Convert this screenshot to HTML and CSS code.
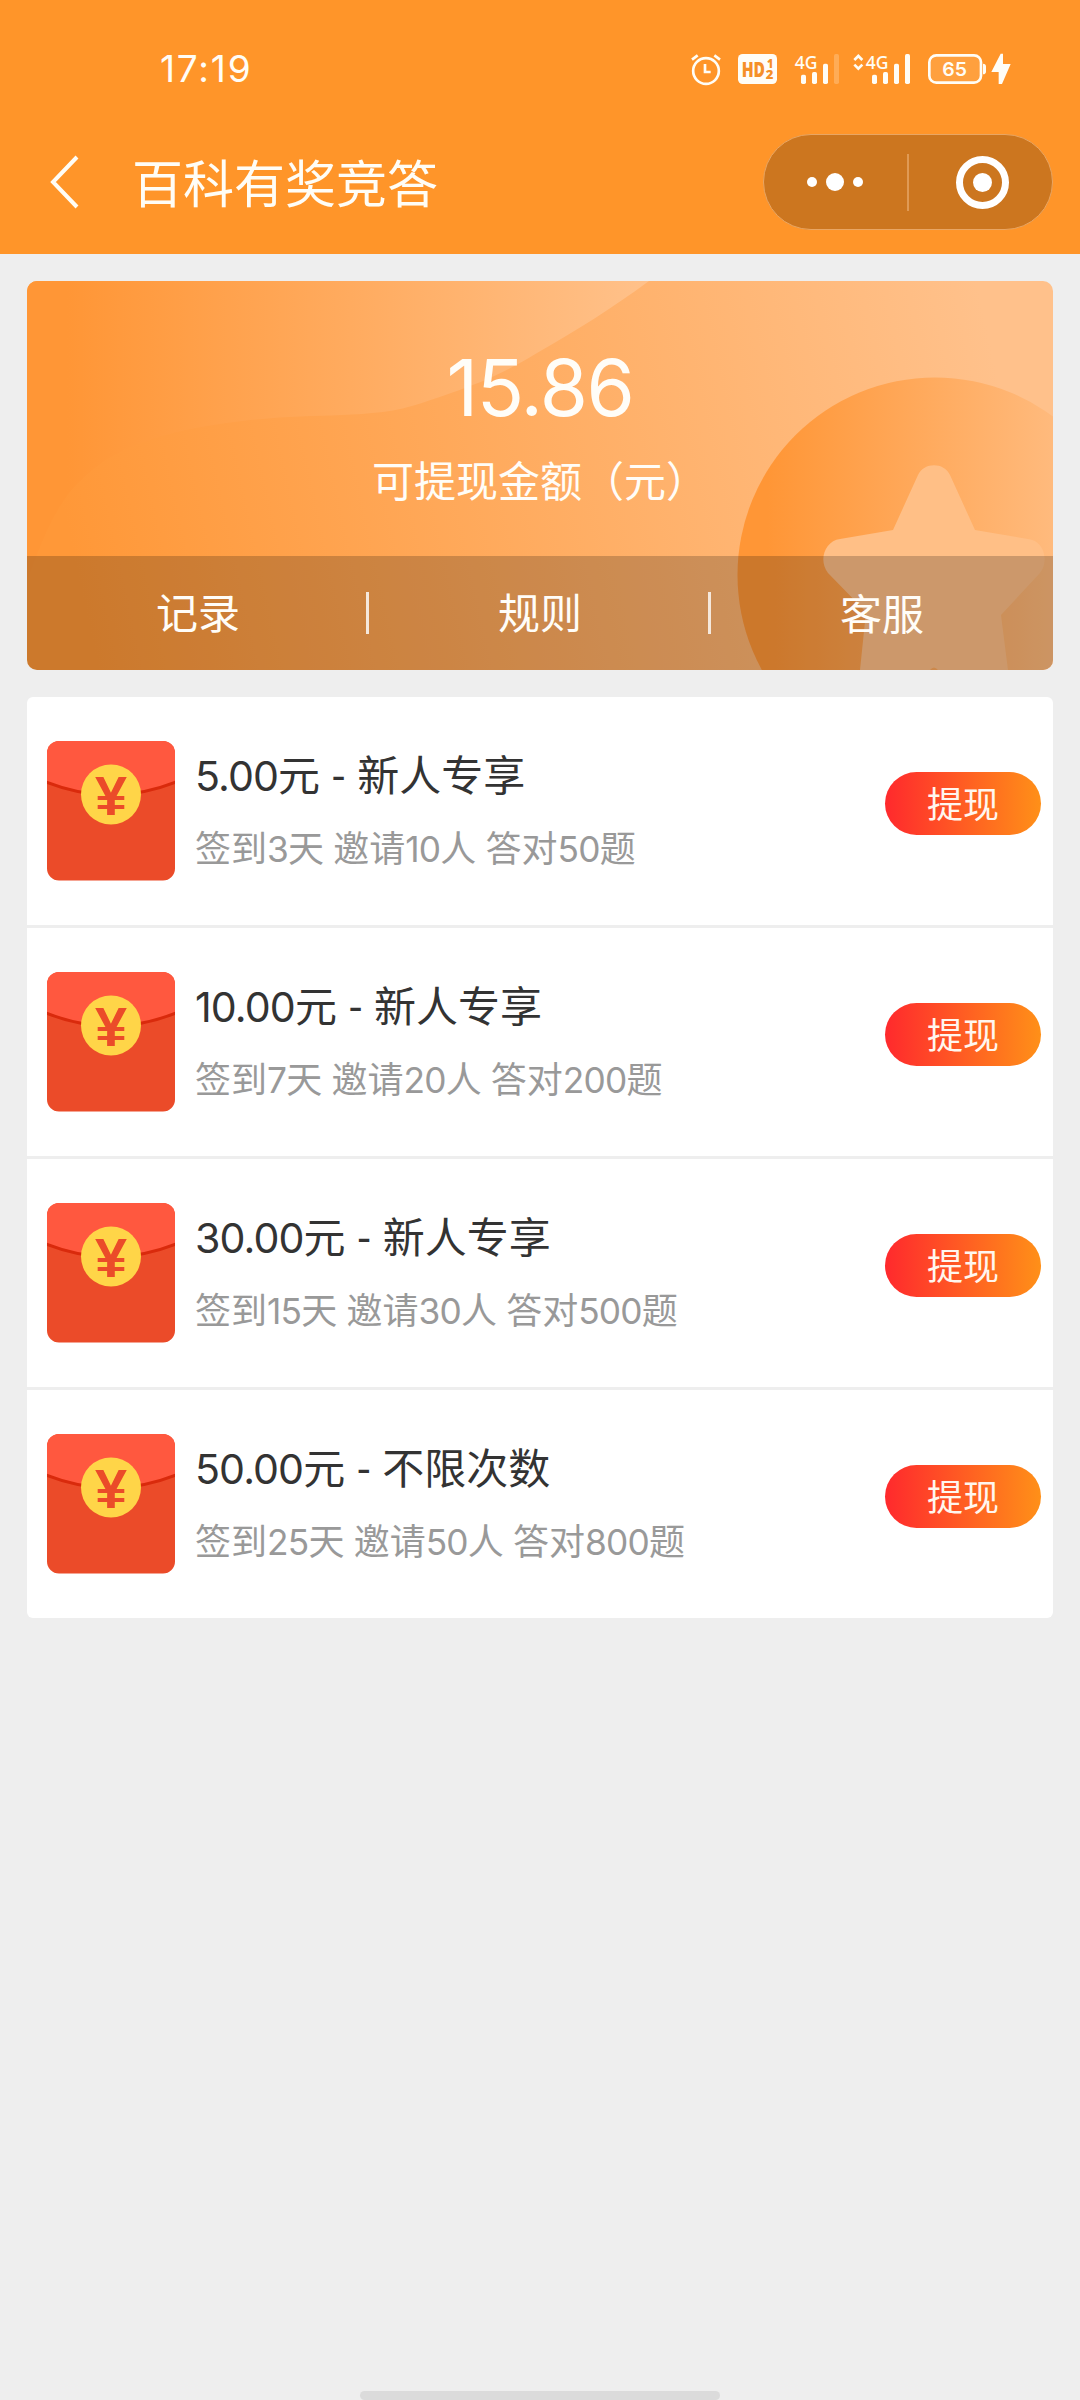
FILE: index.html
```html
<!DOCTYPE html>
<html lang="zh-CN">
<head>
<meta charset="utf-8">
<title>百科有奖竞答</title>
<link rel="stylesheet" href="styles.css">
</head>
<body>
<svg class="defs" width="0" height="0" aria-hidden="true">
  <defs>
    <clipPath id="envelope"><rect width="128" height="139.500" rx="12"/></clipPath>
    <symbol id="red-packet" viewBox="0 0 128 140">
      <g clip-path="url(#envelope)">
        <rect width="128" height="140" fill="#eb4b29"/>
        <path d="M0 0H128V41Q64 67 0 41Z" fill="#ff583f"/>
        <path d="M-1 41Q64 67 129 41" fill="none" stroke="#d92a0c" stroke-width="3"/>
      </g>
      <circle cx="64" cy="53.500" r="30" fill="#ffd548"/>
      <text x="64" y="74" text-anchor="middle" textLength="32" lengthAdjust="spacingAndGlyphs" class="yen">¥</text>
    </symbol>
  </defs>
</svg>

<header class="header">
  <div class="status">
    <time class="clock">17:19</time>
    <svg class="status-icons" viewBox="0 0 1140 240" fill="#fffdf6">
      <g fill="none" stroke="#fffdf6" stroke-width="8">
        <circle cx="138" cy="123" r="38.500"/>
        <path d="M96 89L113 76M180 89L163 76"/>
        <path d="M135 102V126H152"/>
      </g>
      <rect x="234" y="72" width="117" height="90" rx="14"/>
      <g class="hd"><text x="245" y="140" font-size="64" textLength="70" lengthAdjust="spacingAndGlyphs">HD</text>
        <text x="321" y="114" font-size="38" textLength="19" lengthAdjust="spacingAndGlyphs">1</text>
        <text x="317" y="148" font-size="38" textLength="23" lengthAdjust="spacingAndGlyphs">2</text></g>
      <text class="net" x="404" y="116" textLength="68" lengthAdjust="spacingAndGlyphs">4G</text>
      <rect x="423" y="134" width="15" height="28" rx="5"/><rect x="456" y="126" width="15" height="36" rx="5"/><rect x="489" y="101" width="15" height="61" rx="5"/><rect x="522" y="72" width="15" height="90" rx="5" fill-opacity=".22"/>
      <path d="M583 90L595 78L607 90M583 104L595 116L607 104" fill="none" stroke="#fffdf6" stroke-width="8"/>
      <text class="net" x="617" y="116" textLength="68" lengthAdjust="spacingAndGlyphs">4G</text>
      <rect x="636" y="134" width="15" height="28" rx="5"/><rect x="669" y="126" width="15" height="36" rx="5"/><rect x="702" y="101" width="15" height="61" rx="5"/><rect x="735" y="72" width="15" height="90" rx="5"/>
      <rect x="808" y="76" width="155" height="82" rx="21" fill="#ffa03e" stroke="#fffdf6" stroke-width="8"/>
      <path d="M969 101q9 1 9 8v16q0 7-9 8z"/>
      <text class="charge" x="847" y="138" textLength="74" lengthAdjust="spacingAndGlyphs">65</text>
      <path d="M1022 71L994 126H1016V162H1026L1052 102H1029V71Z"/>
    </svg>
  </div>
  <div class="navbar">
    <svg class="back" viewBox="0 0 30 54"><path d="M27 2L3 27L27 52" fill="none" stroke="#fffdf6" stroke-width="4"/></svg>
    <h1 class="title">百科有奖竞答</h1>
    <div class="capsule">
      <svg class="more" viewBox="0 0 56 18" fill="#fff"><circle cx="5" cy="9" r="5"/><circle cx="28" cy="9" r="9"/><circle cx="51" cy="9" r="5"/></svg>
      <span class="capsule-line"></span>
      <svg class="target" viewBox="0 0 53 53" fill="#fff"><circle cx="26.500" cy="26.500" r="23" fill="none" stroke="#fff" stroke-width="7"/><circle cx="26.500" cy="26.500" r="9.500"/></svg>
    </div>
  </div>
</header>

<main class="main">
  <section class="balance">
    <svg class="balance-art" viewBox="0 0 1026 389" preserveAspectRatio="none">
      <defs>
        <linearGradient id="base" gradientUnits="userSpaceOnUse" x1="30" y1="200" x2="950" y2="0"><stop offset="0" stop-color="#ff9838"/><stop offset="1" stop-color="#ffc18b"/></linearGradient>
        <linearGradient id="wave" gradientUnits="userSpaceOnUse" x1="40" y1="0" x2="620" y2="0"><stop offset="0" stop-color="#ff9636"/><stop offset="1" stop-color="#ffc18a"/></linearGradient>
        <linearGradient id="coin" gradientUnits="userSpaceOnUse" x1="740" y1="0" x2="1080" y2="0"><stop offset="0" stop-color="#ff9636"/><stop offset="1" stop-color="#ffc18a"/></linearGradient>
      </defs>
      <rect width="1026" height="389" fill="url(#base)"/>
      <path d="M0 0H622C584 28 550 49 510 72C475 93 455 101 424 112C395 122 375 130 345 132C318 135 292 134 262 136C230 138 210 140 180 145C150 150 128 156 104 166C75 178 58 194 42 212C24 236 14 262 0 300Z" fill="url(#wave)"/>
      <circle cx="908" cy="294" r="197.500" fill="url(#coin)"/>
      <path d="M891 194C897 181 917 181 923 194L948 249L1001 258C1016 259 1023 279 1013 292L974 334L981 389H911Q907 384 903 389H833L839 331L801 292C791 279 798 260 813 258L866 249Z" fill="#ffbf86"/>
    </svg>
    <div class="balance-info">
      <p class="amount">15.86</p>
      <p class="amount-label">可提现金额（元）</p>
    </div>
    <nav class="tabs"><a>记录</a><a>规则</a><a class="service">客服</a></nav>
  </section>

  <ul class="list">
    <li class="row">
      <svg class="packet"><use href="#red-packet"/></svg>
      <div class="info"><h2><span class="num">5.00</span>元 - 新人专享</h2><p>签到<span class="num">3</span>天 邀请<span class="num">10</span>人 答对<span class="num">50</span>题</p></div>
      <button class="withdraw">提现</button>
    </li>
    <li class="row">
      <svg class="packet"><use href="#red-packet"/></svg>
      <div class="info"><h2><span class="num">10.00</span>元 - 新人专享</h2><p>签到<span class="num">7</span>天 邀请<span class="num">20</span>人 答对<span class="num">200</span>题</p></div>
      <button class="withdraw">提现</button>
    </li>
    <li class="row">
      <svg class="packet"><use href="#red-packet"/></svg>
      <div class="info"><h2><span class="num">30.00</span>元 - 新人专享</h2><p>签到<span class="num">15</span>天 邀请<span class="num">30</span>人 答对<span class="num">500</span>题</p></div>
      <button class="withdraw">提现</button>
    </li>
    <li class="row">
      <svg class="packet"><use href="#red-packet"/></svg>
      <div class="info"><h2><span class="num">50.00</span>元 - 不限次数</h2><p>签到<span class="num">25</span>天 邀请<span class="num">50</span>人 答对<span class="num">800</span>题</p></div>
      <button class="withdraw">提现</button>
    </li>
  </ul>
</main>
<div class="home-bar"></div>
</body>
</html>
```
FILE: styles.css
```css
* { box-sizing: border-box; margin: 0; padding: 0; }

body {
  width: 1080px;
  height: 2400px;
  display: flex;
  flex-direction: column;
  background: #eee;
  font-family: Lato, "Noto Sans CJK SC", sans-serif;
  overflow: hidden;
}

.defs { position: absolute; }

.header { height: 254px; background: #ff9529; color: #fffdf6; }

.status {
  height: 134px;
  padding: 30px 40px 0 160px;
  display: flex;
  justify-content: space-between;
}

.clock { font-family: Inter, sans-serif; font-size: 37px; line-height: 77px; letter-spacing: 1.8px; }
.status-icons { width: 380px; height: 80px; }
.net { font: 500 54px "Noto Sans", sans-serif; }
.hd { font-family: "Open Sans", sans-serif; font-weight: 800; fill: #f58f28; }
.charge { font: 600 57px Inter, sans-serif; }
.yen { font: 700 56px "Liberation Sans", sans-serif; fill: #eb4b29; }

.navbar {
  height: 96px;
  padding: 0 27px 0 50px;
  display: flex;
  align-items: center;
}

.back { width: 30px; height: 54px; }

.title {
  margin: 4px 0 0 52px;
  font-size: 51px;
  font-weight: 400;
  line-height: 96px;
}

.capsule {
  width: 290px;
  height: 96px;
  margin-left: auto;
  padding: 0 43px;
  display: flex;
  align-items: center;
  border: 1px solid #e9a663;
  border-radius: 48px;
  background: #cc761f;
}

.more { width: 56px; height: 18px; }
.capsule-line { width: 2px; height: 57px; margin: 0 auto 0 44px; background: #e09a54; }
.target { width: 53px; height: 53px; }

.main { padding: 27px 27px 0; display: grid; gap: 27px; }

.balance {
  position: relative;
  height: 389px;
  display: flex;
  flex-direction: column;
  border-radius: 10px;
  overflow: hidden;
  color: #fffdf8;
  text-align: center;
}

.balance-art { position: absolute; width: 100%; height: 100%; }
.balance-info { position: relative; height: 275px; padding-top: 59px; }
.amount { font-family: Inter, sans-serif; font-size: 78px; font-weight: 400; line-height: 96px; letter-spacing: -1.5px; }
.amount-label { margin-top: 18px; font-size: 42px; line-height: 54px; }

.tabs {
  position: relative;
  height: 114px;
  display: grid;
  grid-template-columns: repeat(3, 1fr);
  align-items: center;
  background: rgba(0, 0, 0, .2);
}

.tabs a {
  height: 42px;
  padding-left: 3px;
  font-size: 42px;
  line-height: 42px;
  border-right: 3px solid #f5e8dc;
}
.tabs .service { border-color: transparent; line-height: 45px; }

.list {
  list-style: none;
  background: #fff;
  border-radius: 6px;
  overflow: hidden;
}

.row {
  height: 231px;
  padding: 0 12px 0 20px;
  display: flex;
  border-bottom: 3px solid #eee;
}
.row:last-child { height: 228px; border: 0; }

.packet { width: 128px; height: 140px; margin-top: 44px; }
.info { flex: 1; margin: 48px 0 0 20px; white-space: nowrap; }
.info h2 { font-size: 42px; font-weight: 400; line-height: 60px; color: #333; }
.info p { margin-top: 16px; font-size: 36px; line-height: 54px; color: #999; }
.num { font-family: Inter, sans-serif; font-size: .98em; font-weight: 400; letter-spacing: -.022em; line-height: 1; }

.withdraw {
  width: 156px;
  height: 63px;
  margin-top: 75px;
  padding-top: 1px;
  border: 0;
  border-radius: 32px;
  background: linear-gradient(90deg, #ff292d, #ff9018);
  color: #fff6ee;
  font: inherit;
  font-size: 36px;
  line-height: 62px;
}

.home-bar {
  width: 360px;
  height: 9px;
  margin: auto auto 0;
  border-radius: 5px;
  background: #dbdbdb;
}
```
